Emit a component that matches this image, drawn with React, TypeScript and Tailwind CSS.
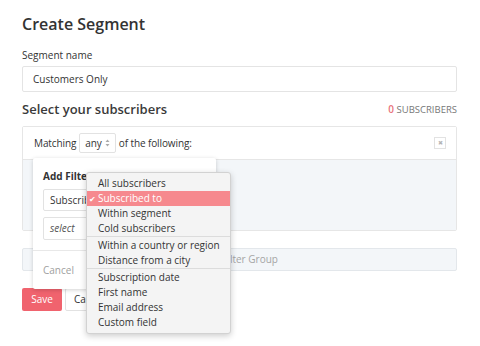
import React from 'react';

const options: (string | null)[] = [
  'All subscribers',
  'Subscribed to',
  'Within segment',
  'Cold subscribers',
  null,
  'Within a country or region',
  'Distance from a city',
  null,
  'Subscription date',
  'First name',
  'Email address',
  'Custom field',
];

function UpDown() {
  return (
    <svg width="5" height="8" viewBox="0 0 5 8" className="ml-[3px]">
      <path d="M2.5 0.5 L4.5 3 H0.5 Z" fill="#aaa" />
      <path d="M2.5 7.5 L4.5 5 H0.5 Z" fill="#aaa" />
    </svg>
  );
}

export default function App() {
  return (
    <div
      className="relative w-[480px] h-[346px] bg-white overflow-hidden text-[#333]"
      style={{ fontFamily: '"Open Sans", "Liberation Sans", sans-serif' }}
    >
      <div className="px-[22px] pt-[12px] pr-[23px]">
        <h1 className="text-[16px] leading-[24px] font-semibold text-[#333] mb-[11px]">Create Segment</h1>
        <div className="text-[10px] leading-[16px] mb-[3px]">Segment name</div>
        <div className="h-[26px] border border-[#e4e4e4] rounded-[2px] flex items-center px-[10px] text-[10px]">
          Customers Only
        </div>

        <div className="flex items-center justify-between mt-[8px] mb-[6px] h-[20px]">
          <div className="text-[13px] font-semibold text-[#3a3a3a]">Select your subscribers</div>
          <div className="text-[9.5px] text-[#777]">
            <span className="text-[#e8737c] font-semibold text-[10px]">0</span> SUBSCRIBERS
          </div>
        </div>

        <div className="border border-[#e6e6e6] rounded-[2px]">
          <div className="h-[32px] bg-white flex items-center pl-[11px] pr-[10px] text-[10px] tracking-[-0.1px]">
            <span>Matching</span>
            <span className="mx-[3px] h-[20px] px-[5px] border border-[#e2e2e2] rounded-[2px] flex items-center">
              any
              <UpDown />
            </span>
            <span>of the following:</span>
            <span className="ml-auto w-[12px] h-[12px] border border-[#e2e2e2] flex items-center justify-center text-[6px] text-[#b5b5b5]">
              ✖
            </span>
          </div>
          <div className="h-[71px] bg-[#f3f6f9] border-t border-[#e6e6e6]" />
        </div>

        <div className="mt-[17px] h-[23px] bg-[#f3f6f9] border border-[#e3e7eb] rounded-[2px] flex items-center justify-center text-[10px] text-[#a5a5a5]">
          Add Filter Group
        </div>

        <div className="mt-[17px] flex gap-[3px]">
          <div className="h-[23px] w-[40px] bg-[#f0636e] rounded-[2px] text-white text-[10px] flex items-center justify-center">
            Save
          </div>
          <div className="h-[23px] px-[8px] bg-white border border-[#e2e2e2] rounded-[2px] text-[10px] flex items-center">
            Cancel
          </div>
        </div>
      </div>

      {/* Add filter popover */}
      <div className="absolute left-[33px] top-[158px] w-[183px] h-[131px] bg-white rounded-[2px] shadow-[0_1px_4px_rgba(0,0,0,0.18)] flex flex-col">
        <div className="px-[10px] pt-[10px]">
          <div className="text-[10px] font-bold leading-[16px]">Add Filter</div>
          <div className="mt-[5px] h-[22px] border border-[#e2e2e2] rounded-[2px] flex items-center px-[6px] text-[10px]">
            Subscribed to
          </div>
          <div className="mt-[6px] h-[23px] border border-[#e2e2e2] rounded-[2px] flex items-center px-[6px] text-[10px] italic text-[#555]">
            select
          </div>
        </div>
        <div className="mt-[10px] border-t border-[#e8e8e8] flex-1 flex items-center px-[10px] text-[10px] text-[#a0a0a0]">
          Cancel
        </div>
      </div>

      {/* Native style menu */}
      <div className="absolute left-[86px] top-[172px] w-[145px] bg-[#f4f4f4] border border-[#d2d2d2] rounded-[3px] shadow-[0_2px_6px_rgba(0,0,0,0.2)] py-[3px] text-[10px] text-[#333]">
        {options.map((o, i) =>
          o === null ? (
            <div key={i} className="h-[2px] border-t border-[#dcdcdc]" />
          ) : (
            <div
              key={i}
              className={
                o === 'Subscribed to'
                  ? 'h-[15px] leading-[15px] pl-[11px] bg-[#f6898e] text-white relative whitespace-nowrap'
                  : 'h-[15px] leading-[15px] pl-[11px] whitespace-nowrap'
              }
            >
              {o === 'Subscribed to' && (
                <span className="absolute left-[2px] top-0 text-[8px]">✔</span>
              )}
              {o}
            </div>
          )
        )}
      </div>
    </div>
  );
}
